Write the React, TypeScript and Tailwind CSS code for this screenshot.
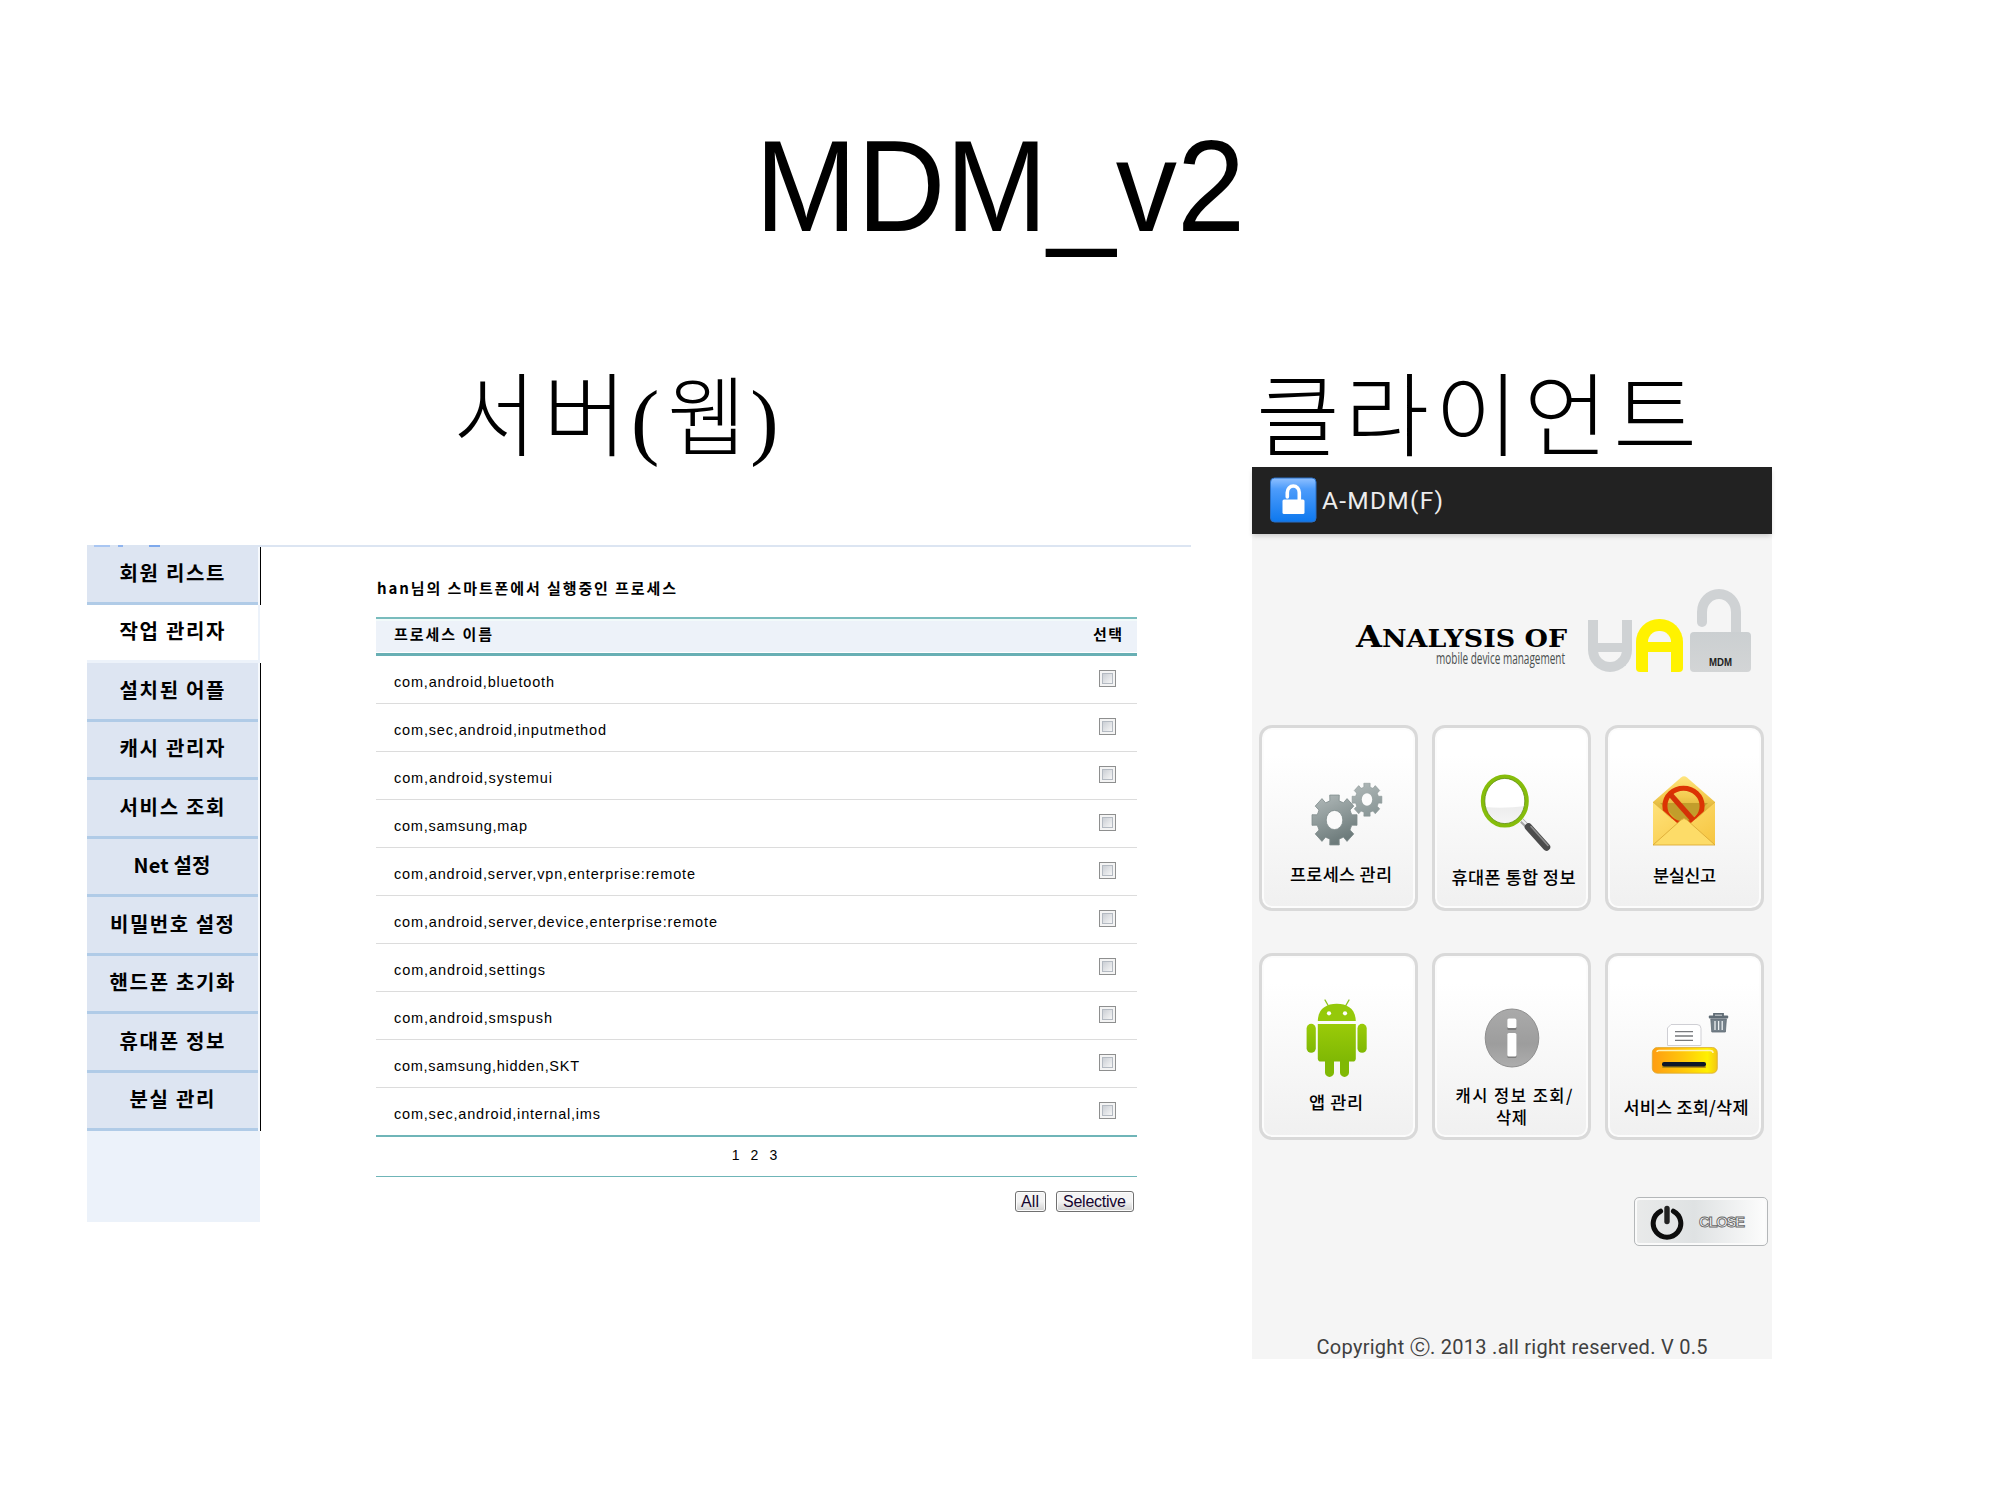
import { useLayoutEffect, useRef, useState } from "react";
import type { ReactNode } from "react";
import clsx from "clsx";

type FitProps = { text: string; width: number; stretch?: boolean; className?: string };

/** One line of text set to an exact measure, by tracking or by horizontal scaling. */
function Fit({ text, width, stretch = false, className }: FitProps) {
  const ref = useRef<HTMLSpanElement>(null);
  const [natural, setNatural] = useState(0);
  useLayoutEffect(() => {
    if (ref.current && natural === 0) setNatural(ref.current.getBoundingClientRect().width);
  }, [natural]);
  const style =
    natural === 0
      ? undefined
      : stretch
        ? { transform: `scaleX(${width / natural})` }
        : { letterSpacing: `${(width - natural) / Math.max(1, text.length - 1)}px` };
  return (
    <span className={clsx("inline-block whitespace-nowrap text-left", className)} style={{ width }}>
      <span ref={ref} className="inline-block origin-left whitespace-pre" style={style}>
        {text}
      </span>
    </span>
  );
}

const KR = "font-['Noto_Sans_CJK_KR',sans-serif]";

const menu = [
  { label: "회원 리스트", w: 105 },
  { label: "작업 관리자", w: 105, active: true },
  { label: "설치된 어플", w: 105 },
  { label: "캐시 관리자", w: 105 },
  { label: "서비스 조회", w: 105 },
  { label: "Net 설정", w: 77 },
  { label: "비밀번호 설정", w: 124 },
  { label: "핸드폰 초기화", w: 125 },
  { label: "휴대폰 정보", w: 105 },
  { label: "분실 관리", w: 85 },
];

const processes = [
  { name: "com,android,bluetooth", w: 160 },
  { name: "com,sec,android,inputmethod", w: 212 },
  { name: "com,android,systemui", w: 158 },
  { name: "com,samsung,map", w: 133 },
  { name: "com,android,server,vpn,enterprise:remote", w: 301 },
  { name: "com,android,server,device,enterprise:remote", w: 323 },
  { name: "com,android,settings", w: 151 },
  { name: "com,android,smspush", w: 158 },
  { name: "com,samsung,hidden,SKT", w: 185 },
  { name: "com,sec,android,internal,ims", w: 206 },
];

function Sidebar() {
  return (
    <nav className="flex w-[174px] flex-col">
      {menu.map((m) => (
        <div key={m.label} className="flex h-[58.5px]">
          <div
            className={clsx(
              "flex w-[171px] items-center justify-center border-b-[3px] pr-[1px] pb-[2px] text-[20px] font-bold leading-none text-black",
              KR,
              m.active ? "border-[#ecf2fa] bg-white" : "border-[#b0cbe7] bg-[#dde5f2]",
            )}
          >
            <Fit text={m.label} width={m.w} />
          </div>
          <div className={clsx("w-[3px]", m.active ? "border-l-2 border-[#ecf2fa]" : "border-r border-black bg-[#f6f9fd]")} />
        </div>
      ))}
      <div className="h-[91px] w-[173px] bg-[#ecf2fa]" />
    </nav>
  );
}

function Checkbox() {
  return (
    <span className="flex h-[17px] w-[17px] items-center justify-center border border-[#8e8f8f] bg-[#f4f4f4]">
      <span className="h-[11px] w-[11px] border border-[#b4bac2] bg-gradient-to-br from-[#cbcfd5] to-[#f6f6f6]" />
    </span>
  );
}

function WinButton({ label, w, className }: { label: string; w: number; className: string }) {
  return (
    <button
      className={clsx(
        "flex h-[21px] items-center justify-center rounded-[3px] border border-[#707070] bg-gradient-to-b from-[#f4f4f4] from-50% to-[#cfcfcf] to-100% pr-[1px] font-['Liberation_Sans',sans-serif] text-[16px] leading-none text-[#15052e] shadow-[inset_0_0_0_1px_#fcfcfc]",
        className,
      )}
    >
      <Fit text={label} width={w} />
    </button>
  );
}

function ProcessTable() {
  return (
    <section className="ml-[115px] w-[761px] pt-[26px] text-black">
      <h3 className={clsx("flex h-[30px] items-center text-[15px] font-bold leading-none", KR)}>
        <Fit text="han님의 스마트폰에서 실행중인 프로세스" width={299} className="ml-px" />
      </h3>
      <div
        className={clsx(
          "mt-[15px] flex h-[39px] items-center justify-between border-t-2 border-b-[3px] border-t-[#79bcbd] border-b-[#68afb4] bg-[#edf2f9] pr-[15px] pb-[5px] pl-[18px] text-[15px] font-bold leading-none shadow-[inset_0_2px_0_#f2fafa,inset_0_-1px_0_#ffffff]",
          KR,
        )}
      >
        <Fit text="프로세스 이름" width={98} />
        <Fit text="선택" width={29} />
      </div>
      {processes.map((p, i) => (
        <div
          key={p.name}
          className={clsx(
            "flex items-center justify-between pr-[21px] pl-[18px]",
            i === processes.length - 1 ? "h-[49px] border-b-2 border-[#6fb5b8]" : "h-[48px] border-b border-[#dcdcdc]",
          )}
        >
          <Fit
            text={p.name}
            width={p.w}
            className="pt-[5px] font-['Liberation_Sans',sans-serif] text-[14.5px] leading-none"
          />
          <span className="pb-[3px]">
            <Checkbox />
          </span>
        </div>
      ))}
      <div className="flex h-[40px] items-center justify-center gap-[11px] border-b border-[#6fb5b8] pr-[4px] pb-[4px] font-['Liberation_Sans',sans-serif] text-[14px] leading-none">
        <span>1</span>
        <span>2</span>
        <span>3</span>
      </div>
      <div className="mt-[14px] flex justify-end gap-[10px] pr-[3px]">
        <WinButton label="All" w={18} className="w-[31px]" />
        <WinButton label="Selective" w={63} className="w-[78px]" />
      </div>
    </section>
  );
}

function gearPoints(cx: number, cy: number, rx: number, ry: number) {
  const pts: string[] = [];
  const put = (deg: number, k: number) => {
    const a = (deg * Math.PI) / 180;
    pts.push(`${(cx + rx * k * Math.cos(a)).toFixed(2)},${(cy + ry * k * Math.sin(a)).toFixed(2)}`);
  };
  for (let i = 0; i < 8; i++) {
    const c = i * 45;
    put(c - 15, 0.78);
    put(c - 12, 1);
    put(c + 12, 1);
    put(c + 15, 0.78);
    put(c + 22.5, 0.77);
  }
  return pts.join(" ");
}

function GearsIcon() {
  return (
    <svg viewBox="1262 728 153 132" className="h-[132px] w-[153px]">
      <defs>
        <linearGradient id="gear" x1="0" y1="0" x2="0.4" y2="1">
          <stop offset="0" stopColor="#b4bcbc" />
          <stop offset="1" stopColor="#6d7b7b" />
        </linearGradient>
        <linearGradient id="gearSmall" x1="0" y1="0" x2="0.4" y2="1">
          <stop offset="0" stopColor="#b2baba" />
          <stop offset="1" stopColor="#8c9999" />
        </linearGradient>
      </defs>
      <polygon points={gearPoints(1334.5, 820, 23, 25.5)} fill="url(#gear)" stroke="#7f8b8b" strokeWidth="0.8" />
      <ellipse cx="1334.5" cy="820" rx="8.3" ry="9.6" fill="#fafafa" stroke="#7f8b8b" strokeWidth="0.8" />
      <polygon points={gearPoints(1367, 799.7, 15.2, 16.8)} fill="url(#gearSmall)" stroke="#8a9696" strokeWidth="0.6" />
      <ellipse cx="1367" cy="799.5" rx="5.2" ry="6.2" fill="#fcfcfc" />
    </svg>
  );
}

function MagnifierIcon() {
  return (
    <svg viewBox="1435 728 153 132" className="h-[132px] w-[153px]">
      <defs>
        <linearGradient id="lens" x1="0" y1="0" x2="0" y2="1">
          <stop offset="0" stopColor="#ececec" />
          <stop offset="1" stopColor="#f8f8f8" />
        </linearGradient>
      </defs>
      <path d="M1519 818 L1529 828" stroke="#a6a6a6" strokeWidth="5" />
      <path d="M1520 818 L1528 826" stroke="#f0f0f0" strokeWidth="2" />
      <path d="M1528.5 827 L1546.5 847" stroke="#4c4c4c" strokeWidth="7.5" strokeLinecap="round" />
      <path d="M1531 826.5 L1548 845.5" stroke="#8c8c8c" strokeWidth="1.6" strokeLinecap="round" />
      <ellipse cx="1504.8" cy="801" rx="22" ry="24.6" fill="#ffffff" />
      <path d="M1484 807 Q1504 809 1526 806 A21 23.5 0 0 1 1484 807 Z" fill="url(#lens)" />
      <ellipse cx="1504.8" cy="801" rx="22" ry="24.6" fill="none" stroke="#86bd0b" strokeWidth="4" />
      <ellipse cx="1504.8" cy="801" rx="20" ry="22.6" fill="none" stroke="#5f8f10" strokeWidth="0.8" />
    </svg>
  );
}

function EnvelopeIcon() {
  return (
    <svg viewBox="1608 728 153 132" className="h-[132px] w-[153px]">
      <defs>
        <linearGradient id="env" x1="0" y1="0" x2="1" y2="1">
          <stop offset="0" stopColor="#ffe27a" />
          <stop offset="1" stopColor="#f6c53f" />
        </linearGradient>
        <linearGradient id="envIn" x1="0" y1="0" x2="0" y2="1">
          <stop offset="0" stopColor="#ffe57e" />
          <stop offset="0.45" stopColor="#f3cb50" />
          <stop offset="1" stopColor="#c29a22" />
        </linearGradient>
      </defs>
      <path d="M1653 802 L1681 777.5 Q1684 775 1687 777.5 L1715 802 V822 H1653 Z" fill="url(#envIn)" />
      <path d="M1660 803 H1708 L1684 826 Z" fill="#c29d2b" />
      <ellipse cx="1683.5" cy="806" rx="18.6" ry="17.8" fill="none" stroke="#dc3303" strokeWidth="5" />
      <path d="M1670 794 L1693 820" stroke="#d43207" strokeWidth="5.4" />
      <path d="M1653 802 L1684 829 L1715 802 V845 H1653 Z" fill="url(#env)" />
      <path d="M1653 845 L1681 820 Q1684 817 1687 820 L1715 845 Z" fill="#fddc68" stroke="#dcaa35" strokeWidth="0.9" />
      <path d="M1653 802 L1672 819 M1715 802 L1696 819" stroke="#dcaa35" strokeWidth="0.7" />
    </svg>
  );
}

function AndroidIcon() {
  return (
    <svg viewBox="1262 956 153 132" className="h-[132px] w-[153px]">
      <defs>
        <linearGradient id="droid" x1="0" y1="0" x2="0" y2="1">
          <stop offset="0" stopColor="#9acb08" />
          <stop offset="1" stopColor="#7fb804" />
        </linearGradient>
      </defs>
      <path d="M1325 1000 L1329 1007 M1349 1000 L1345 1007" stroke="#8fc31f" strokeWidth="1.4" strokeLinecap="round" />
      <path d="M1317.8 1021 C1318 1009 1326 1003.8 1336.8 1003.8 C1347.6 1003.8 1355.4 1009 1355.8 1021 Z" fill="#95c90a" />
      <circle cx="1329" cy="1013.3" r="2.1" fill="#fff" />
      <circle cx="1345" cy="1013.3" r="2.1" fill="#fff" />
      <path d="M1317.8 1024 H1355.8 V1058.5 Q1355.8 1061.6 1352.7 1061.6 H1320.9 Q1317.8 1061.6 1317.8 1058.5 Z" fill="url(#droid)" />
      <rect x="1306.6" y="1023.8" width="9.2" height="29" rx="4.6" fill="url(#droid)" />
      <rect x="1357.5" y="1023.8" width="9.2" height="29" rx="4.6" fill="url(#droid)" />
      <path d="M1325 1060 H1334 V1072.4 A4.5 4.5 0 0 1 1325 1072.4 Z M1340 1060 H1349 V1072.4 A4.5 4.5 0 0 1 1340 1072.4 Z" fill="#80b904" />
    </svg>
  );
}

function InfoIcon() {
  return (
    <svg viewBox="1435 956 153 132" className="h-[132px] w-[153px]">
      <defs>
        <linearGradient id="info" x1="0" y1="0" x2="0" y2="1">
          <stop offset="0" stopColor="#aaaaaa" />
          <stop offset="0.6" stopColor="#9d9d9d" />
          <stop offset="1" stopColor="#adadad" />
        </linearGradient>
      </defs>
      <ellipse cx="1512" cy="1038" rx="26.8" ry="29" fill="url(#info)" stroke="#8f8f8f" strokeWidth="1" />
      <rect x="1507.4" y="1027" width="9" height="3" rx="1" fill="#7d7d7d" />
      <rect x="1507.4" y="1055" width="9" height="3" rx="1" fill="#7d7d7d" />
      <rect x="1507.4" y="1018.5" width="9" height="9.5" rx="1.5" fill="#fff" />
      <rect x="1507.4" y="1033" width="9" height="23.5" rx="1.5" fill="#fff" />
    </svg>
  );
}

function PrinterIcon() {
  return (
    <svg viewBox="1608 956 153 132" className="h-[132px] w-[153px]">
      <defs>
        <linearGradient id="prn" x1="0" y1="0" x2="1" y2="0">
          <stop offset="0" stopColor="#ff9d12" />
          <stop offset="0.5" stopColor="#ffc90a" />
          <stop offset="0.85" stopColor="#fff000" />
          <stop offset="1" stopColor="#f3c614" />
        </linearGradient>
      </defs>
      <path d="M1671 1024.5 H1697 Q1701 1024.5 1701 1028.5 V1045.5 H1667.5 V1028 Z" fill="#fff" stroke="#cfcfd4" strokeWidth="1" />
      <path d="M1675 1031.6 H1693 M1675 1036 H1693 M1675 1040.3 H1693" stroke="#77797c" strokeWidth="1.3" />
      <rect x="1652.3" y="1047.5" width="65" height="25.7" rx="5" fill="url(#prn)" stroke="#d9ac35" strokeWidth="0.8" />
      <path d="M1657 1052 Q1657 1050.5 1659 1050.5 H1710 Q1713 1050.5 1713 1053" stroke="#fff3b5" strokeWidth="1.5" fill="none" />
      <rect x="1662" y="1066" width="44" height="2" rx="1" fill="#b98f10" />
      <rect x="1662" y="1062" width="44" height="4.6" rx="2" fill="#0d1629" />
      <path d="M1714 1016 V1013.8 H1723 V1016" fill="none" stroke="#5f6b74" strokeWidth="1.8" />
      <rect x="1708.8" y="1015.6" width="19.4" height="3" rx="1" fill="#5f6b74" />
      <path d="M1710.8 1019 H1726.4 L1725.4 1032 H1711.8 Z" fill="#75818a" stroke="#5f6b74" strokeWidth="0.8" />
      <path d="M1715 1021 V1030 M1718.6 1021 V1030 M1722.2 1021 V1030" stroke="#eef1f3" strokeWidth="1.3" />
    </svg>
  );
}

function Card({ icon, children, className }: { icon: ReactNode; children: ReactNode; className?: string }) {
  return (
    <div
      className={clsx(
        "flex w-[159px] flex-col items-center rounded-[13px] border-[3px] border-[#d9d9d9] bg-gradient-to-b from-white from-15% to-[#f0f0f0] text-[17.5px] font-medium text-black shadow-[inset_0_0_0_2px_#fcfcfc]",
        KR,
        className,
      )}
    >
      {icon}
      {children}
    </div>
  );
}

function Brand() {
  return (
    <div className="flex h-[88px] items-end justify-end pr-[21px]">
      <div className="mr-[21px] flex h-[51px] flex-col items-end pt-[3px] text-black">
        <div className="flex h-[26px] items-baseline font-['DejaVu_Serif',serif] font-bold leading-[26px]">
          <Fit text="A" width={26} stretch className="text-[29px]" />
          <Fit text="NALYSIS OF" width={185} stretch className="text-[25px]" />
        </div>
        <Fit
          text="mobile device management"
          width={129}
          stretch
          className="mr-[2px] font-['Open_Sans',sans-serif] text-[15.5px] leading-[16px] text-[#4a4f4f]"
        />
      </div>
      <div className="flex h-[52px] w-[44px] flex-col justify-between rounded-b-[22px] border-x-[10px] border-b-[10px] border-[#cfd2d4]">
        <span />
        <span className="mb-[10px] h-[9px] bg-[#cfd2d4]" />
      </div>
      <div className="ml-[4px] flex h-[53px] w-[47px] flex-col rounded-t-[23px] rounded-b-[4px] border-x-[12px] border-t-[12px] border-[#fff200]">
        <span className="mt-[11px] h-[10px] bg-[#fff200]" />
      </div>
      <div className="ml-[7px] flex w-[61px] flex-col items-center">
        <svg viewBox="0 0 61 43" className="h-[43px] w-[61px]">
          <path d="M12 33 V23 A17 18 0 0 1 46 23 V43" fill="none" stroke="#cfd2d4" strokeWidth="10" />
          <circle cx="12" cy="33" r="5" fill="#cfd2d4" />
        </svg>
        <div className="flex h-[40px] w-[61px] items-end justify-center rounded-[4px] bg-gradient-to-b from-[#cbcfd1] to-[#d3d5d6] pb-[3px] font-['Liberation_Sans',sans-serif] text-[10px] font-bold leading-[12px] text-[#222]">
          <Fit text="MDM" width={23} stretch />
        </div>
      </div>
    </div>
  );
}

function Phone() {
  return (
    <div className="flex h-[892px] w-[520px] flex-col bg-[#f5f5f5]">
      <header className="flex h-[67px] items-center bg-[#222222] pb-[2px] pl-[18px] shadow-[0_3px_5px_-1px_rgba(0,0,0,0.18)]">
        <svg viewBox="0 0 47 46" className="h-[46px] w-[47px]">
          <defs>
            <linearGradient id="app" x1="0" y1="0" x2="0" y2="1">
              <stop offset="0" stopColor="#8fc0ff" />
              <stop offset="0.25" stopColor="#4d9cfb" />
              <stop offset="1" stopColor="#0d78ee" />
            </linearGradient>
          </defs>
          <rect x="0.5" y="1" width="45.5" height="44" rx="4" fill="url(#app)" stroke="#2a6fc4" strokeWidth="1" />
          <path d="M17.3 20 V15.5 A6 6.5 0 0 1 29.3 15.5 V23" fill="none" stroke="#fff" strokeWidth="3.6" strokeLinecap="round" />
          <rect x="12.5" y="22.5" width="22" height="14.5" rx="1.5" fill="#fff" />
        </svg>
        <Fit
          text="A-MDM(F)"
          width={121}
          className="mt-[2px] ml-[5px] font-['Roboto',sans-serif] text-[24.5px] leading-[30px] text-[#ededed]"
        />
      </header>
      <div className="mt-[50px]">
        <Brand />
      </div>
      <div className="mt-[53px] flex h-[186px] gap-[14px] pl-[7px]">
        <Card icon={<GearsIcon />}>
          <Fit text="프로세스 관리" width={102} className="mt-[-1px] ml-[5px] leading-[30px]" />
        </Card>
        <Card icon={<MagnifierIcon />}>
          <Fit text="휴대폰 통합 정보" width={124} className="mt-[2px] ml-[4px] leading-[30px]" />
        </Card>
        <Card icon={<EnvelopeIcon />}>
          <Fit text="분실신고" width={63} className="leading-[30px]" />
        </Card>
      </div>
      <div className="mt-[42px] flex h-[187px] gap-[14px] pl-[7px]">
        <Card icon={<AndroidIcon />}>
          <Fit text="앱 관리" width={54} className="mt-[-1px] mr-[5px] leading-[30px]" />
        </Card>
        <Card icon={<InfoIcon />}>
          <Fit text="캐시 정보 조회/" width={117} className="mt-[-4px] ml-[5px] text-[16.5px] leading-[22px]" />
          <Fit text="삭제" width={31} className="text-[16.5px] leading-[22px]" />
        </Card>
        <Card icon={<PrinterIcon />}>
          <Fit text="서비스 조회/삭제" width={125} className="mt-[4px] ml-[3px] leading-[30px]" />
        </Card>
      </div>
      <div className="mt-[57px] flex justify-end pr-[4px]">
        <button className="flex h-[49px] w-[134px] items-center rounded-[5px] border border-[#b4b7b9] bg-gradient-to-r from-[#e9eaea] via-[#dfe2e3] via-45% to-[#fdfdfd] pl-[15px] shadow-[inset_0_0_0_2px_#fafafa]">
          <svg viewBox="0 0 34 36" className="h-[36px] w-[34px]">
            <path d="M10.6 7.2 A13.8 13.8 0 1 0 23.4 7.2" fill="none" stroke="#0d0d0d" strokeWidth="5" strokeLinecap="round" />
            <path d="M17 4.5 V17.5" stroke="#222" strokeWidth="5.4" strokeLinecap="round" />
          </svg>
          <Fit
            text="CLOSE"
            width={46}
            className="ml-[15px] font-['Liberation_Sans',sans-serif] text-[15px] font-bold leading-none text-white [-webkit-text-stroke:0.9px_#666]"
          />
        </button>
      </div>
      <footer className="mt-auto flex h-[24px] items-center justify-center font-['Roboto',sans-serif] text-[20px] leading-[24px] text-[#404040]">
        <Fit text="Copyright ⓒ. 2013 .all right reserved. V 0.5" width={391} />
      </footer>
    </div>
  );
}

export default function App() {
  return (
    <main className="flex h-[1500px] w-[2000px] flex-col overflow-hidden bg-white">
      <h1 className="flex h-[360px] justify-center pt-[119px] font-['Liberation_Sans',sans-serif] text-[122.5px] leading-[140px] text-black">
        <span className="h-[140px] origin-[50%_80%] scale-y-[1.055]">MDM_v2</span>
      </h1>
      <div className="flex pl-[87px]">
        <div className="flex w-[1104px] flex-col">
          <h2
            className={clsx(
              "flex h-[185px] items-baseline pl-[366px] text-[91px] font-light leading-[98px] text-black",
              KR,
            )}
          >
            <Fit text="서버" width={174} />
            <span className="ml-[4px] font-['Liberation_Serif',serif] text-[85px]">(</span>
            <Fit text="웹" width={80} className="ml-[8px] text-[86px]" />
            <span className="ml-[3px] font-['Liberation_Serif',serif] text-[85px]">)</span>
          </h2>
          <div className="z-10 mb-[-1px] flex h-[2px] bg-[#dce5f2] pl-[7px]">
            <span className="z-10 h-[2px] w-[16px] bg-[#a9c6f2]" />
            <span className="z-10 ml-[8px] h-[2px] w-[5px] bg-[#8fb4ee]" />
            <span className="z-10 ml-[26px] h-[2px] w-[11px] bg-[#7ea9ec]" />
          </div>
          <div className="flex">
            <Sidebar />
            <ProcessTable />
          </div>
        </div>
        <div className="ml-[61px] flex w-[520px] flex-col">
          <h2 className={clsx("h-[107px] pl-[4px] text-[91px] font-light leading-[98px] text-black", KR)}>
            <Fit text="클라이언트" width={441} />
          </h2>
          <Phone />
        </div>
      </div>
    </main>
  );
}
